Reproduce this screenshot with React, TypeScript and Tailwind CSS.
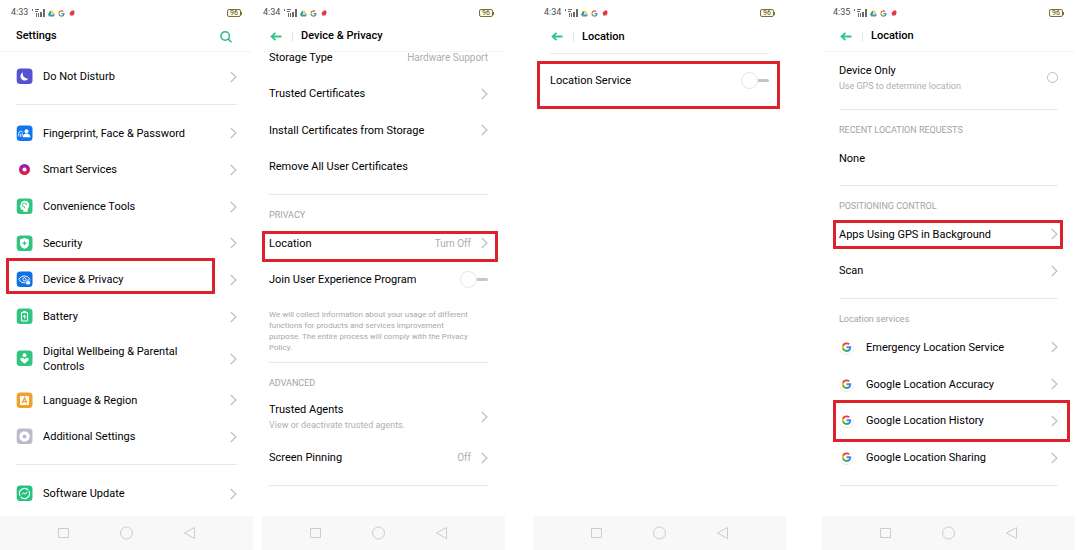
import React from 'react';

type IconName = 'moon' | 'people' | 'ring' | 'head' | 'shield' | 'eye' | 'battery' | 'wellbeing' | 'language' | 'gear' | 'update' | 'google';

const iconColors: Record<IconName, string> = {
  moon: '#5551d0',
  people: '#0f76ee',
  ring: 'none',
  head: '#2fc57f',
  shield: '#2fc57f',
  eye: '#0f6fe4',
  battery: '#2fc57f',
  wellbeing: '#2fc57f',
  language: '#f2a02c',
  gear: '#b9bbcb',
  update: '#22c37d',
  google: 'none',
};

const GooglePaths = () => (
  <>
    <path fill="#4285F4" d="M22.5 12.2c0-.8-.1-1.5-.2-2.2H12v4.3h5.9a5 5 0 0 1-2.2 3.3v2.8h3.6c2-2 3.2-4.8 3.2-8.2z" />
    <path fill="#34A853" d="M12 23c3 0 5.5-1 7.3-2.7l-3.6-2.8a6.6 6.6 0 0 1-9.9-3.5H2.2v2.9A11 11 0 0 0 12 23z" />
    <path fill="#FBBC05" d="M5.8 14.1a6.6 6.6 0 0 1 0-4.2V7.1H2.2a11 11 0 0 0 0 9.9z" />
    <path fill="#EA4335" d="M12 5.4c1.6 0 3.1.6 4.2 1.6l3.1-3.1A11 11 0 0 0 2.2 7.1l3.6 2.8A6.6 6.6 0 0 1 12 5.4z" />
  </>
);

const glyphs: Record<IconName, React.ReactNode> = {
  moon: <path fill="#fff" d="M7 4.2a4.3 4.3 0 1 0 5.3 6.3A4.8 4.8 0 0 1 7 4.2z" />,
  people: (
    <g fill="#fff">
      <circle cx="10.5" cy="6.2" r="2" />
      <path d="M6.7 12.3c0-2.5 1.5-3.8 3.8-3.8s3.8 1.300 3.8 3.8z" />
      <g fill="none" stroke="#fff" strokeWidth=".9">
        <path d="M2.8 11.5V8.3a2.2 2.2 0 0 1 4.2-.8M4.8 12V8.5M6.4 10.5v-2" />
      </g>
    </g>
  ),
  ring: (
    <>
      <defs>
        <linearGradient id="ringFill" x1="0" y1="0" x2="0" y2="1">
          <stop offset="0" stopColor="#8d21b5" />
          <stop offset=".55" stopColor="#c5127f" />
          <stop offset="1" stopColor="#e51c46" />
        </linearGradient>
      </defs>
      <circle cx="8.5" cy="8.5" r="3.8" fill="none" stroke="url(#ringFill)" strokeWidth="3.4" />
    </>
  ),
  head: (
    <>
      <path fill="#fff" d="M8.8 2.7a4.5 4.5 0 0 1 4.4 4.6c0 1.7-.9 2.8-1.5 3.6v2.9H7.3v-2H5.6c-.6 0-.9-.4-.9-1V9.2l-1.1-.3 1-2A4.4 4.4 0 0 1 8.8 2.7z" />
      <path fill="none" stroke="#2fc57f" strokeWidth=".9" d="M8.5 10.300V8.9a2 2 0 1 1 1.9-1.8M8.7 7.2h.2" />
    </>
  ),
  shield: (
    <>
      <path fill="#fff" d="M8.5 3l4.5 1.5v3.9c0 2.5-1.7 4.4-4.5 5.4C5.7 12.8 4 10.9 4 8.4V4.5z" />
      <path stroke="#2fc57f" strokeWidth="1.2" d="M8.5 6.200v4M6.5 8.2h4" />
    </>
  ),
  eye: (
    <g fill="none" stroke="#fff">
      <path d="M9.5 11.8C6 12.3 3.7 10 2.9 8.5 4.2 6.3 6.2 5 8.5 5s4.300 1.300 5.600 3.500" />
      <circle cx="8.5" cy="8.4" r="1.6" />
      <path fill="#fff" strokeWidth=".5" d="M10.4 10.4h3.4v2.7h-3.4z" />
      <path strokeWidth=".8" d="M11.2 10.300V9.5a.9.9 0 0 1 1.8 0v.8" />
    </g>
  ),
  battery: (
    <>
      <path fill="#fff" d="M7 3h3v1H7z" />
      <rect x="5.5" y="4.5" width="6" height="8.5" rx=".8" fill="none" stroke="#fff" strokeWidth="1.1" />
      <path fill="#fff" d="M9 5.8 6.9 9h1.3l-.3 2.6L10.2 8.300H8.800z" />
    </>
  ),
  wellbeing: (
    <g fill="#fff">
      <circle cx="8.5" cy="5.2" r="1.9" />
      <path d="M8.5 13.8 4.7 10.4C3.5 9 4.7 7.3 6.3 7.7c1 .2 1.7.8 2.2 1.5.5-.7 1.2-1.3 2.2-1.5 1.6-.4 2.8 1.3 1.6 2.7z" />
    </g>
  ),
  language: (
    <>
      <rect x="4" y="4" width="9" height="9" rx="1" fill="#fff" />
      <path fill="none" stroke="#f2a02c" strokeWidth="1.2" d="M6.2 11.3 8.5 5.7l2.3 5.6M7 9.6h3" />
    </>
  ),
  gear: (
    <>
      <path fill="#fff" d="M6.6 3.4h3.8l.8 1.2 1.5.4 1.1 3.5-1.1 3.5-1.5.4-.8 1.2H6.600l-.8-1.200-1.500-.4-1.100-3.500L4.300 5l1.500-.4z" />
      <circle cx="8.5" cy="8.5" r="2" fill="#b9bbcb" />
    </>
  ),
  update: (
    <g fill="none" stroke="#fff" strokeWidth="1.2">
      <path d="M12.4 5.2A5.1 5.1 0 0 0 4 10.8M4.6 11.8A5.1 5.1 0 0 0 13 6.2" />
      <path d="M5.8 9.2 7.5 8l1.8 1.2 2-2.5" strokeWidth="1" />
    </g>
  ),
  google: (
    <>
      <circle cx="7.5" cy="8.9" r="7.2" fill="#e4e4e4" />
      <circle cx="7.5" cy="8.2" r="7" fill="#fff" />
      <g transform="translate(2.300 2.900) scale(.44)">
        <GooglePaths />
      </g>
    </>
  ),
};

const RowIcon = ({ name }: { name: IconName }) => (
  <svg className="size-[17px] shrink-0" viewBox="0 0 17 17" aria-hidden="true">
    <rect x=".7" y=".5" width="15.8" height="15.6" rx="3.5" fill={iconColors[name]} />
    {glyphs[name]}
  </svg>
);

const Chevron = () => (
  <svg className="h-3 w-[7px] shrink-0" viewBox="0 0 7 12" fill="none" stroke="#c2c2c2" strokeWidth="1.3" aria-hidden="true">
    <path d="M.8 1 5.900 6 .8 11" />
  </svg>
);

interface RowProps {
  title: string;
  subtitle?: string;
  icon?: IconName;
  value?: string;
  plain?: boolean;
  // position of the red marker around the row
  mark?: string;
}

const Row: React.FC<RowProps> = ({ title, subtitle, icon, value, plain, mark }) => {
  const content = (
    <>
      {icon && <RowIcon name={icon} />}
      <span className="flex min-w-0 flex-1 flex-col">
        <span className="text-[11px] leading-[15px] text-black">{title}</span>
        {subtitle && <span className="pt-px text-[9px] leading-[14px] text-[#b0b0b0]">{subtitle}</span>}
      </span>
      {value && <span className="shrink-0 text-[10px] text-[#adadad]">{value}</span>}
      {!plain && <Chevron />}
      {mark && <span className={`pointer-events-none absolute border-3 border-[#dc222c] ${mark}`} />}
    </>
  );
  const style = 'relative flex w-full items-center gap-[10px] text-left';
  return plain ? <div className={style}>{content}</div> : <button type="button" className={style}>{content}</button>;
};

const Rows = ({ className, children }: { className: string; children: React.ReactNode }) => (
  <div className={`grid auto-rows-fr ${className}`}>{children}</div>
);

const Divider = () => <hr className="mt-[9px] mb-[10px] border-[#e8e8e8]" />;

const Heading = ({ children }: { children: React.ReactNode }) => (
  <h2 className="text-[9px] leading-5 text-[#a3a3a3]">{children}</h2>
);

const Toggle = ({ label }: { label: string }) => (
  <label className="relative flex items-center justify-between text-[11px] leading-[15px]">
    {label}
    <span className="flex items-center">
      <input type="checkbox" className="peer sr-only" />
      <span className="size-[17px] rounded-full border border-[#e6e6e6] bg-white" />
      <span className="h-[3px] w-[11px] rounded-r-sm bg-[#c6c6c6] peer-checked:bg-[#2fc57f]" />
    </span>
  </label>
);

const StatusBar = ({ time, className }: { time: string; className: string }) => (
  <div className={`flex h-[25px] items-center pt-px ${className}`}>
    <span className="text-[9px] text-[#4d4d4d]">{time}</span>
    <svg className="ml-1 h-2 w-[14px]" viewBox="0 0 14 8" fill="#6a6a6a" aria-hidden="true">
      <path d="M0 0h1v2H0zM3 0h4v1H3zM3 2h3v1H3zM4 4h1v4H4zM6 4h1v4H6zM8 3h2v5H8zM11 0h2v8h-2z" />
    </svg>
    <svg className="ml-[2px] size-[7px]" viewBox="0 0 24 22" aria-hidden="true">
      <path fill="#1fa463" d="M8 1 0 14l4 7L12 8z" />
      <path fill="#ffd04b" d="M8 1h8l8 13h-8z" />
      <path fill="#4285f4" d="M4 21h16l4-7H8z" />
    </svg>
    <svg className="ml-[3px] size-[7px]" viewBox="0 0 24 24" aria-hidden="true">
      <GooglePaths />
    </svg>
    <svg className="ml-1 size-[6px]" viewBox="0 0 6 6" aria-hidden="true">
      <path fill="#e0394a" d="M2 1 5 .3l.6 2.5-1 2.4L1.600 5.700.5 3.500z" />
    </svg>
    <span className="ml-auto flex items-center">
      <span className="flex h-2 w-[14px] items-center justify-center rounded-xs border border-[#76703f] bg-[#fffbe0] text-[7px] leading-none text-[#55502c]">96</span>
      <span className="h-[3px] w-px bg-[#76703f]" />
    </span>
  </div>
);

const BackHeader = ({ title, className }: { title: string; className: string }) => (
  <header className={`flex h-[27px] items-center pb-[3px] ${className}`}>
    <button type="button" aria-label="Back" className="ml-px">
      <svg className="block h-[10px] w-3" viewBox="0 0 12 10" fill="none" stroke="#2ec886" strokeWidth="1.8">
        <path d="M11.5 4.500H1.500M5.500 .8 1.500 4.500l4 3.700" />
      </svg>
    </button>
    <span className="ml-[10px] h-[10px] w-px bg-[#e6e6e6]" />
    <h1 className="ml-2 text-[11px] font-medium">{title}</h1>
  </header>
);

const NavBar = ({ className }: { className: string }) => (
  <nav className={`mt-auto flex h-[34px] items-center justify-center gap-[49px] bg-[#f8f8f8] ${className}`}>
    <button type="button" aria-label="Recent apps">
      <svg className="block size-[14px]" viewBox="0 0 14 14" fill="none" stroke="#cccccc"><path d="M1.500 2.500h10v9h-10z" /></svg>
    </button>
    <button type="button" aria-label="Home">
      <svg className="block size-[14px]" viewBox="0 0 14 14" fill="none" stroke="#cccccc"><circle cx="6.500" cy="7" r="6" /></svg>
    </button>
    <button type="button" aria-label="Back">
      <svg className="block size-[14px]" viewBox="0 0 14 14" fill="none" stroke="#cccccc"><path d="M11.500 1.500v11L1.500 7z" /></svg>
    </button>
  </nav>
);

const SettingsScreen = () => (
  <section className="flex flex-[253] flex-col">
    <StatusBar time="4:33" className="px-[11px]" />
    <header className="flex h-[27px] items-center justify-between border-b border-[#f4f4f4] px-4 pb-[3px]">
      <h1 className="text-[11px] font-medium">Settings</h1>
      <button type="button" aria-label="Search" className="mr-[5px]">
        <svg className="block size-3" viewBox="0 0 12 12" fill="none" stroke="#2fb888" strokeWidth="1.5">
          <circle cx="5.2" cy="5" r="4.2" />
          <path d="m8.300 8.100 3.200 3.200" />
        </svg>
      </button>
    </header>
    <div className="px-4 pt-[6px]">
      <Rows className="min-h-[37px]">
        <Row icon="moon" title="Do Not Disturb" />
      </Rows>
      <Divider />
      <Rows className="min-h-[220px]">
        <Row icon="people" title="Fingerprint, Face & Password" />
        <Row icon="ring" title="Smart Services" />
        <Row icon="head" title="Convenience Tools" />
        <Row icon="shield" title="Security" />
        <Row icon="eye" title="Device & Privacy" mark="-top-1 bottom-1 -left-[10px] right-[22px]" />
        <Row icon="battery" title="Battery" />
      </Rows>
      <Rows className="min-h-[47px]">
        <Row icon="wellbeing" title="Digital Wellbeing & Parental Controls" />
      </Rows>
      <Rows className="min-h-[73px]">
        <Row icon="language" title="Language & Region" />
        <Row icon="gear" title="Additional Settings" />
      </Rows>
      <Divider />
      <Rows className="min-h-[37px]">
        <Row icon="update" title="Software Update" />
      </Rows>
    </div>
    <NavBar className="px-4" />
  </section>
);

const PrivacyScreen = () => (
  <section className="ml-[9px] flex flex-[243] flex-col">
    <StatusBar time="4:34" className="pr-[11px] pl-px" />
    <BackHeader title="Device & Privacy" className="border-b border-[#f4f4f4] pr-[17px] pl-[7px]" />
    <div className="-mt-[13px] pr-[17px] pl-[7px]">
      <Rows className="min-h-[146px]">
        <Row plain title="Storage Type" value="Hardware Support" />
        <Row title="Trusted Certificates" />
        <Row title="Install Certificates from Storage" />
        <Row plain title="Remove All User Certificates" />
      </Rows>
      <Divider />
      <Heading>PRIVACY</Heading>
      <Rows className="min-h-[73px]">
        <Row title="Location" value="Turn Off" mark="top-[6px] bottom-0 -left-[7px] -right-[10px]" />
        <Toggle label="Join User Experience Program" />
      </Rows>
      <p className="mt-[11px] pr-[14px] text-[8px] leading-[11px] text-[#a8a8a8]">
        We will collect information about your usage of different functions for products and services improvement purpose. The entire process will comply with the Privacy Policy.
      </p>
      <Divider />
      <Heading>ADVANCED</Heading>
      <Rows className="min-h-[46px] pt-[2px]">
        <Row title="Trusted Agents" subtitle="View or deactivate trusted agents." />
      </Rows>
      <Rows className="min-h-[37px]">
        <Row title="Screen Pinning" value="Off" />
      </Rows>
      <Divider />
    </div>
    <NavBar className="pr-[17px] pl-[7px]" />
  </section>
);

const LocationServiceScreen = () => (
  <section className="ml-7 flex flex-[253] flex-col">
    <StatusBar time="4:34" className="px-[11px]" />
    <BackHeader title="Location" className="px-[17px]" />
    <div className="px-[17px]">
      <hr className="mt-px border-[#f7e6e0]" />
      <div className="relative mt-2 grid h-[37px]">
        <Toggle label="Location Service" />
        <span className="pointer-events-none absolute -top-px -right-[11px] -bottom-[10px] -left-[13px] border-3 border-[#dc222c]" />
      </div>
    </div>
    <NavBar className="px-[17px]" />
  </section>
);

const LocationScreen = () => (
  <section className="mr-[2px] ml-9 flex flex-[253] flex-col">
    <StatusBar time="4:35" className="px-[11px]" />
    <BackHeader title="Location" className="border-b border-[#f4f4f4] px-[17px]" />
    <div className="px-[17px] pt-[2px]">
      <label className="flex min-h-[46px] items-center justify-between pt-px">
        <span className="flex flex-col">
          <span className="text-[11px] leading-[15px]">Device Only</span>
          <span className="pt-px text-[9px] leading-[14px] text-[#b0b0b0]">Use GPS to determine location</span>
        </span>
        <input type="radio" name="mode" className="size-[11px] appearance-none rounded-full border border-[#bdbdbd] checked:bg-[#2fc57f]" />
      </label>
      <Divider />
      <Heading>RECENT LOCATION REQUESTS</Heading>
      <Rows className="min-h-[36px]">
        <Row plain title="None" />
      </Rows>
      <Divider />
      <Heading>POSITIONING CONTROL</Heading>
      <Rows className="min-h-[73px]">
        <Row title="Apps Using GPS in Background" mark="top-1 bottom-1 -left-[6px] -right-[5px]" />
        <Row title="Scan" />
      </Rows>
      <Divider />
      <Heading>Location services</Heading>
      <Rows className="min-h-[147px]">
        <Row icon="google" title="Emergency Location Service" />
        <Row icon="google" title="Google Location Accuracy" />
        <Row icon="google" title="Google Location History" mark="-top-[3px] -bottom-[3px] -left-[6px] -right-3" />
        <Row icon="google" title="Google Location Sharing" />
      </Rows>
      <Divider />
    </div>
    <NavBar className="px-[17px]" />
  </section>
);

const App: React.FC = () => {
  return (
    <main className="flex min-h-screen bg-white font-[Roboto,sans-serif] text-black">
      <SettingsScreen />
      <PrivacyScreen />
      <LocationServiceScreen />
      <LocationScreen />
    </main>
  );
};

export default App;
